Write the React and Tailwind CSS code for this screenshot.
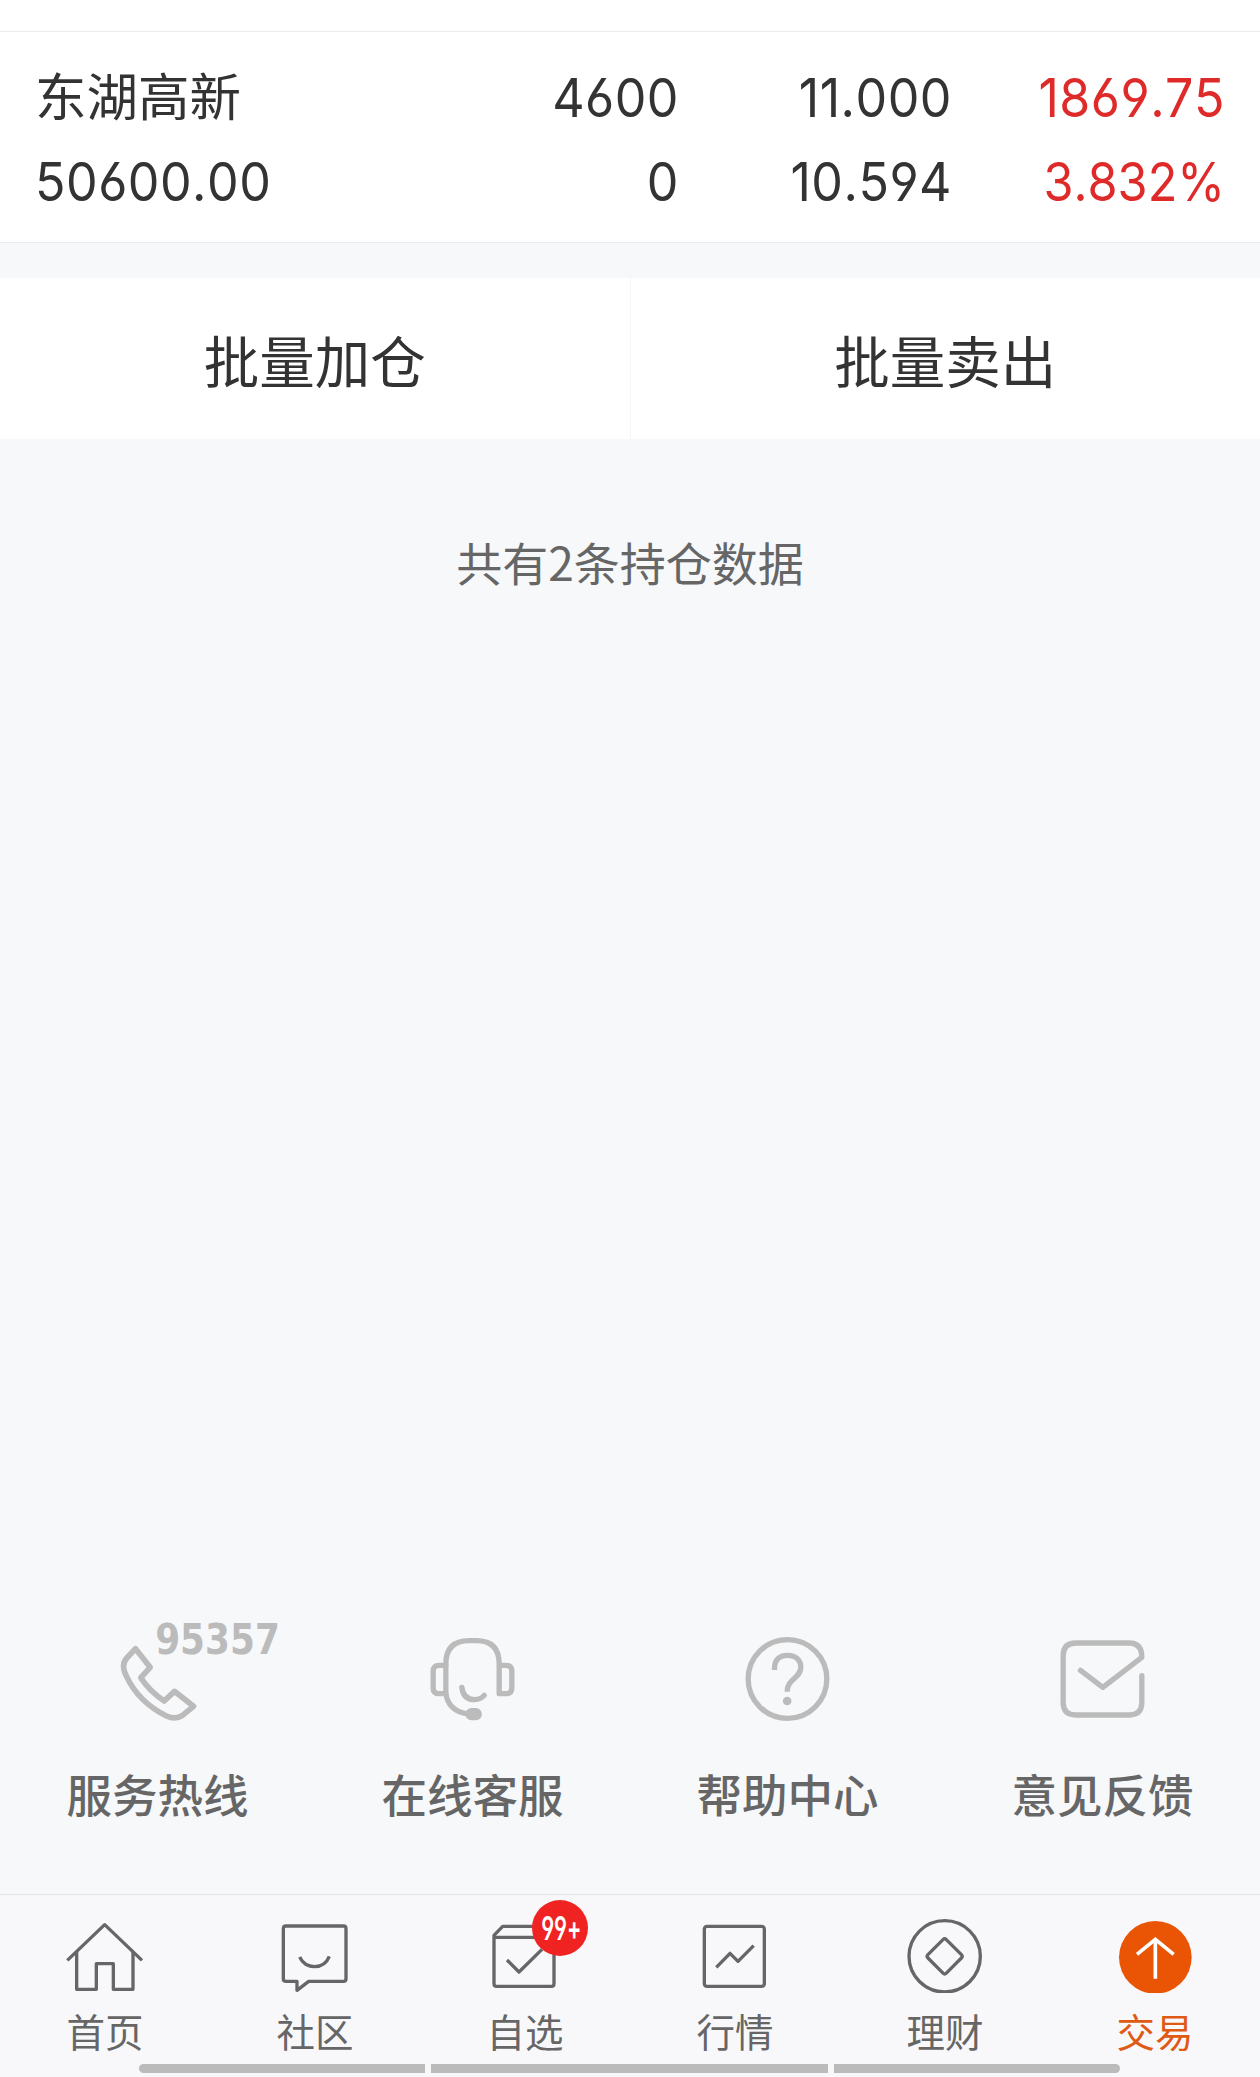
import React, { useState } from 'react';
import clsx from 'clsx';

const NUM = "font-['Inter','Noto_Sans_CJK_SC',sans-serif] [font-feature-settings:'cv03','cv04','kern'_0,'calt'_0]";

function PhoneIcon() {
  return (
    <svg viewBox="-7.5 60 720 330" className="w-[240px] h-[110px] overflow-visible" fill="none" stroke="#bbbbbb" strokeWidth="17" strokeLinejoin="round">
      <path d="M285 146L329 202L301 233Q326 272 371 303L402 274L459 319L425 347Q405 360 378 348Q294 306 258 229Q240 195 259 174Z" />
      <text x="344" y="162" fill="#bbbbbb" stroke="none" fontSize="127" fontWeight="700" textLength="374" lengthAdjust="spacingAndGlyphs" className="font-['DejaVu_Sans',sans-serif]">
        95357
      </text>
    </svg>
  );
}

function HeadsetIcon() {
  return (
    <svg viewBox="-22.5 60 720 330" className="w-[240px] h-[110px]" fill="none" stroke="#bbbbbb" strokeWidth="16" strokeLinecap="round" strokeLinejoin="round">
      <path d="M256 281V192Q256 122 326 122H348Q416 122 416 192V281H436Q454 281 454 263V214Q454 196 436 196H416" />
      <path d="M256 196H236Q218 196 218 214V263Q218 281 236 281H256Q264 332 318 341" />
      <path d="M304 262Q308 298 342 299Q361 298 371 286" />
      <rect x="315" y="324" width="49" height="37" rx="18" fill="#bbbbbb" stroke="none" />
    </svg>
  );
}

function HelpIcon() {
  return (
    <svg viewBox="-7.5 60 720 330" className="w-[240px] h-[110px]" fill="none" stroke="#bbbbbb" strokeWidth="16">
      <circle cx="351" cy="237" r="118" />
      <path d="M312 210C311 180 326 166 351 166C378 166 391 183 391 202C391 235 350 235 350 275" />
      <circle cx="350" cy="303" r="13" fill="#bbbbbb" stroke="none" />
    </svg>
  );
}

function FeedbackIcon() {
  return (
    <svg viewBox="7.5 60 720 330" className="w-[240px] h-[110px]" fill="none" stroke="#bbbbbb" strokeWidth="16" strokeLinecap="round" strokeLinejoin="round">
      <path d="M300 211L367 262L484 172Q484 129 446 129H286Q248 129 248 167V307Q248 345 286 345H446Q484 345 484 307V227" />
    </svg>
  );
}

function HomeIcon() {
  return (
    <svg viewBox="195 105 240 234" className="w-20 h-[78px]" fill="none" stroke="#666666" strokeWidth="10" strokeLinejoin="round">
      <path d="M202 241L314 134L426 241" />
      <path d="M230 216V328H289V251H340V328H399V216" />
    </svg>
  );
}

function CommunityIcon() {
  return (
    <svg viewBox="825 105 240 234" className="w-20 h-[78px]" fill="none" stroke="#666666" strokeWidth="10" strokeLinejoin="round">
      <path d="M858 138H1030Q1038 138 1038 146V296Q1038 304 1030 304H926L891 331V304H858Q850 304 850 296V146Q850 138 858 138Z" />
      <path d="M899 231Q912 259 944 260Q976 259 988 229" />
    </svg>
  );
}

function WatchlistIcon() {
  return (
    <svg viewBox="195 105 240 234" className="w-20 h-[78px]" fill="none" stroke="#666666" strokeWidth="10" strokeLinejoin="round">
      <path d="M222 172H402V311Q402 319 394 319H230Q222 319 222 311V166L248 139H376L402 166V172" />
      <path d="M261 240L297 276L366 208" />
    </svg>
  );
}

function MarketIcon() {
  return (
    <svg viewBox="825 105 240 234" className="w-20 h-[78px]" fill="none" stroke="#666666" strokeWidth="10" strokeLinejoin="round">
      <rect x="853" y="139" width="180" height="180" rx="8" />
      <path d="M889 262L930 220L954 244L1001 197" />
    </svg>
  );
}

function WealthIcon() {
  return (
    <svg viewBox="195 105 240 234" className="w-20 h-[78px]" fill="none" stroke="#666666" strokeWidth="10">
      <circle cx="314" cy="229" r="107" />
      <rect x="275" y="190" width="78" height="78" rx="7" transform="rotate(45 314 229)" />
    </svg>
  );
}

function TradeIcon() {
  return (
    <svg viewBox="825 105 240 234" className="w-20 h-[78px]" fill="none" stroke="#ffffff" strokeWidth="11">
      <circle cx="946" cy="232" r="109" fill="#e95504" stroke="none" />
      <path d="M891 223L946 178L1001 223M946 178V296" />
    </svg>
  );
}

const holding = {
  name: '东湖高新',
  marketValue: '50600.00',
  amount: '4600',
  available: '0',
  price: '11.000',
  cost: '10.594',
  profit: '1869.75',
  profitRate: '3.832%',
};

const services = [
  { label: '服务热线', icon: PhoneIcon },
  { label: '在线客服', icon: HeadsetIcon },
  { label: '帮助中心', icon: HelpIcon },
  { label: '意见反馈', icon: FeedbackIcon },
];

const tabs = [
  { id: 'home', label: '首页', icon: HomeIcon },
  { id: 'community', label: '社区', icon: CommunityIcon },
  { id: 'watchlist', label: '自选', icon: WatchlistIcon, badge: '99+' },
  { id: 'market', label: '行情', icon: MarketIcon },
  { id: 'wealth', label: '理财', icon: WealthIcon },
  { id: 'trade', label: '交易', icon: TradeIcon },
];

function Num({ children, left, className = 'scale-x-[0.93] tracking-[0.5px]' }) {
  return (
    <div className={clsx('h-[84px] leading-[84px] text-[54px]', NUM, left ? 'origin-left' : 'origin-right text-right', className)}>
      {children}
    </div>
  );
}

function HoldingRow({ item }) {
  return (
    <div className="h-[212px] pt-6 pl-[35px] pr-[35px] bg-white border-y border-[#ebebeb] text-[#333333] grid grid-cols-[344px_300px_273px_273px]">
      <div>
        <div className="h-[84px] leading-[76px] text-[51.5px]">{item.name}</div>
        <Num left>{item.marketValue}</Num>
      </div>
      <div>
        <Num>{item.amount}</Num>
        <Num>{item.available}</Num>
      </div>
      <div>
        <Num>{item.price}</Num>
        <Num>{item.cost}</Num>
      </div>
      <div className="text-[#df2a2a]">
        <Num>{item.profit}</Num>
        <Num className="scale-x-[0.9]">{item.profitRate}</Num>
      </div>
    </div>
  );
}

function App() {
  const [activeTab, setActiveTab] = useState('trade');

  return (
    <div className="w-[1260px] h-[2077px] flex flex-col overflow-hidden bg-[#f7f8fa] font-['Noto_Sans_CJK_SC',sans-serif]">
      <div className="h-[31px] shrink-0 bg-white" />
      <HoldingRow item={holding} />

      <div className="mt-[35px] h-[161px] shrink-0 flex bg-white text-[55.5px] leading-[163px] text-[#333333]">
        <button className="flex-1 border-r border-[#f5f6f7]">批量加仓</button>
        <button className="flex-1">批量卖出</button>
      </div>

      <p className="mt-[89px] text-center text-[46px] leading-[66px] text-[#666666]">共有2条持仓数据</p>

      <div className="mt-auto h-[274px] shrink-0 grid grid-cols-4">
        {services.map((service) => (
          <div key={service.label} className="flex flex-col items-center">
            <service.icon />
            <span className="mt-[30px] text-[45.5px] leading-[66px] font-medium text-[#666666]">{service.label}</span>
          </div>
        ))}
      </div>

      <div className="h-[170px] shrink-0 grid grid-cols-6 bg-[#f8f8fb] border-t border-[#e2e3e5]">
        {tabs.map((tab) => (
          <button
            key={tab.id}
            onClick={() => setActiveTab(tab.id)}
            className={clsx('relative flex flex-col items-center pt-5', activeTab === tab.id ? 'text-[#df5a14]' : 'text-[#666666]')}
          >
            <tab.icon />
            <span className="mt-[9px] text-[38.5px] leading-[56px]">{tab.label}</span>
            {tab.badge && (
              <span className={clsx('absolute left-[112px] top-[5px] w-[56px] h-[56px] rounded-full bg-[#f02323] flex items-center justify-center text-white text-[33px] font-semibold', NUM)}>
                <span className="pt-0.5 pl-1 scale-x-[0.65]">{tab.badge}</span>
              </span>
            )}
          </button>
        ))}
      </div>

      {/* gesture bar */}
      <div className="h-[13px] shrink-0 flex gap-1.5 pl-[139px] bg-[#f8f8fb]">
        <div className="w-[286px] h-[9px] rounded-l-full bg-[#bbbbbb]" />
        <div className="w-[397px] h-[9px] bg-[#bbbbbb]" />
        <div className="w-[286px] h-[9px] rounded-r-full bg-[#bbbbbb]" />
      </div>
    </div>
  );
}

export default App;
